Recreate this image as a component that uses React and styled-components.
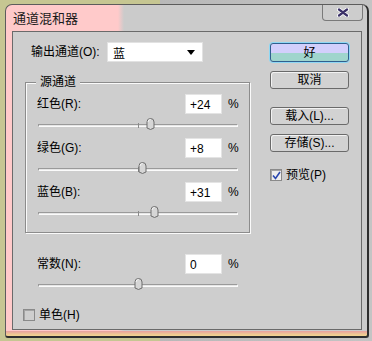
import React from 'react';
import styled, { createGlobalStyle } from 'styled-components';

const Global = createGlobalStyle`
  html, body {
    margin: 0;
    padding: 0;
  }
  body {
    width: 372px;
    height: 341px;
    overflow: hidden;
    background: #c6c692;
    font-family: "Liberation Sans", "Noto Sans CJK SC", sans-serif;
    font-size: 12px;
    color: #000;
  }
`;

const Page = styled.div`
  width: 372px;
  height: 341px;
  box-sizing: border-box;
  padding: 4px 0 0 5px;
  background: linear-gradient(90deg, #c6c692 0, #c6c692 160px, #b8b8b8 160px, #c4c4c4 100%);
`;

const Frame = styled.div`
  width: 364px;
  height: 334px;
  box-sizing: border-box;
  display: flex;
  flex-direction: column;
  padding: 0 5px 6px 6px;
  border: 1px solid #5c5c5c;
  border-right: 2px solid #2e2e2e;
  border-bottom: 2px solid #2e2e2e;
  border-radius: 7px 7px 3px 3px;
  background:
    linear-gradient(180deg, transparent 0, transparent 326px, #e8a0a0 326px, #f0d090 330px),
    linear-gradient(90deg, #ffcaca 0, #ffcaca 112px, #cbcbcb 118px, #cbcbcb 100%);
`;

const TitleBar = styled.div`
  height: 26px;
  display: flex;
  align-items: flex-start;
  justify-content: space-between;
`;

const Title = styled.div`
  margin: 4px 0 0 1px;
  font-family: "Noto Sans CJK SC", sans-serif;
  font-size: 13px;
  line-height: 18px;
  color: #1a1a1a;
`;

const CloseBtn = styled.div`
  width: 41px;
  height: 16px;
  box-sizing: border-box;
  margin-right: -1px;
  display: flex;
  align-items: center;
  justify-content: center;
  border: 1px solid #7a7a7a;
  border-top: none;
  border-radius: 0 0 4px 4px;
  background: #cdcdcd;
`;

const Client = styled.div`
  flex: 1;
  display: flex;
  border: 1px solid #6a6a6a;
  background: #cecece;
`;

const LeftCol = styled.div`
  width: 225px;
  padding-left: 12px;
  display: flex;
  flex-direction: column;
`;

const RightCol = styled.div`
  margin-left: 20px;
  padding-top: 11px;
  display: flex;
  flex-direction: column;
`;

const OutputRow = styled.div`
  margin: 10px 0 0 6px;
  display: flex;
  align-items: center;
  height: 20px;
`;

const OutputLabel = styled.span`
  width: 76px;
  line-height: 20px;
`;

const Select = styled.div`
  width: 96px;
  height: 20px;
  box-sizing: border-box;
  padding: 0 5px;
  display: flex;
  align-items: center;
  justify-content: space-between;
  background: #fff;
  border: 1px solid #e2e2e2;
`;

const Caret = styled.span`
  width: 0;
  height: 0;
  margin-right: 2px;
  border-left: 4px solid transparent;
  border-right: 4px solid transparent;
  border-top: 5px solid #000;
`;

const Group = styled.div`
  position: relative;
  width: 225px;
  height: 151px;
  box-sizing: border-box;
  margin-top: 20px;
  padding: 11px 0 0 11px;
  border: 1px solid #8c8c8c;
  box-shadow: inset 1px 1px 0 #fafafa, 1px 1px 0 #fafafa;
`;

const Legend = styled.span`
  position: absolute;
  top: -8px;
  left: 10px;
  padding: 0 4px;
  line-height: 15px;
  background: #cecece;
`;

const Row = styled.div`
  width: 201px;
  height: 20px;
  display: flex;
  align-items: center;
  margin-left: ${p => p.$indent || 0}px;
  margin-top: ${p => p.$top || 0}px;
`;

const Label = styled.span`
  flex: 1;
  line-height: 20px;
`;

const NumBox = styled.div`
  width: 37px;
  height: 20px;
  box-sizing: border-box;
  padding-left: 4px;
  line-height: 20px;
  background: #fff;
  border: 1px solid #e4e4e4;
`;

const Percent = styled.span`
  width: 10px;
  margin-left: 6px;
  line-height: 20px;
`;

const SliderWrap = styled.div`
  position: relative;
  width: 200px;
  height: 12px;
  margin: 4px 0 ${p => p.$bottom || 0}px ${p => p.$indent || 1}px;
`;

const Track = styled.div`
  position: absolute;
  left: 0;
  right: 0;
  top: 6px;
  height: 3px;
  box-sizing: border-box;
  border-top: 1px solid #9a9a9a;
  border-bottom: 1px solid #fbfbfb;
  border-left: 1px solid #9a9a9a;
  border-right: 1px solid #fbfbfb;
  background: #e6e6e6;
`;

const Tick = styled.div`
  position: absolute;
  left: 100px;
  top: 5px;
  width: 1px;
  height: 5px;
  background: #8a8a8a;
`;

const Thumb = styled.svg`
  position: absolute;
  top: 0;
  left: ${p => 100 + p.$value / 2 - 4}px;
`;

const Button = styled.div`
  width: 79px;
  height: 18px;
  box-sizing: border-box;
  margin-top: ${p => p.$top || 0}px;
  display: flex;
  align-items: center;
  justify-content: center;
  border: 1px solid #6a6a6a;
  border-radius: 3px;
  background: #d2d2d2;
  box-shadow: inset 1px 1px 0 #f2f2f2;
  line-height: 16px;
`;

const PrimaryButton = styled(Button)`
  height: 19px;
  border-color: #2f5f8f;
  background: linear-gradient(180deg, #d2cffc 0, #d2cffc 50%, #9fd5cd 50%, #9fd5cd 100%);
  box-shadow: 0 0 0 1px #8fd8f4;
`;

const CheckRow = styled.div`
  display: flex;
  align-items: center;
  gap: 4px;
  margin-top: ${p => p.$top || 0}px;
  margin-left: ${p => p.$indent || 0}px;
  line-height: 14px;
`;

const Box = styled.div`
  width: 12px;
  height: 12px;
  box-sizing: border-box;
  display: flex;
  align-items: center;
  justify-content: center;
  border: 1px solid #8a8a8a;
  background: ${p => (p.$checked ? '#eeeeee' : '#cecece')};
  box-shadow: inset 1px 1px 0 #a4a4a4;
`;

function Slider({ value, bottom, indent }) {
  return (
    <SliderWrap $bottom={bottom} $indent={indent}>
      <Track />
      <Tick />
      <Thumb $value={value} width="9" height="12" viewBox="0 0 9 12">
        <path
          d="M1 4 Q1 0.5 4.5 0.5 Q8 0.5 8 4 L8 10 L4.5 11.5 L1 10 Z"
          fill="#d6d6d6"
          stroke="#6c6c6c"
          strokeWidth="1"
        />
        <path d="M2 4 Q2 1.5 4.5 1.5" fill="none" stroke="#f6f6f6" strokeWidth="1" />
      </Thumb>
    </SliderWrap>
  );
}

function ValueRow({ label, value, top, indent }) {
  return (
    <Row $top={top} $indent={indent}>
      <Label>{label}</Label>
      <NumBox>{value}</NumBox>
      <Percent>%</Percent>
    </Row>
  );
}

const channels = [
  { label: '红色(R):', value: 24 },
  { label: '绿色(G):', value: 8 },
  { label: '蓝色(B):', value: 31 },
];

export default function App() {
  return (
    <>
      <Global />
      <Page>
        <Frame>
          <TitleBar>
            <Title>通道混和器</Title>
            <CloseBtn>
              <svg width="12" height="9" viewBox="0 0 12 9">
                <path d="M2 1.5 L10 7.5 M10 1.5 L2 7.5" stroke="#fff" strokeWidth="4" strokeLinecap="round" />
                <path d="M2 1.5 L10 7.5 M10 1.5 L2 7.5" stroke="#3b3168" strokeWidth="2.2" strokeLinecap="round" />
              </svg>
            </CloseBtn>
          </TitleBar>
          <Client>
            <LeftCol>
              <OutputRow>
                <OutputLabel>输出通道(O):</OutputLabel>
                <Select>
                  <span>蓝</span>
                  <Caret />
                </Select>
              </OutputRow>
              <Group>
                <Legend>源通道</Legend>
                {channels.map((c, i) => (
                  <React.Fragment key={c.label}>
                    <ValueRow label={c.label} value={`+${c.value}`} />
                    <Slider value={c.value} bottom={i < 2 ? 8 : 0} />
                  </React.Fragment>
                ))}
              </Group>
              <ValueRow label="常数(N):" value="0" top={21} indent={12} />
              <Slider value={0} indent={13} />
              <CheckRow $top={18} $indent={-2}>
                <Box />
                <span>单色(H)</span>
              </CheckRow>
            </LeftCol>
            <RightCol>
              <PrimaryButton>好</PrimaryButton>
              <Button $top={9}>取消</Button>
              <Button $top={18}>载入(L)...</Button>
              <Button $top={9}>存储(S)...</Button>
              <CheckRow $top={16}>
                <Box $checked>
                  <svg width="9" height="9" viewBox="0 0 9 9">
                    <path d="M1 4.5 L3.5 7.5 L8 1" fill="none" stroke="#2b48b0" strokeWidth="1.6" />
                  </svg>
                </Box>
                <span>预览(P)</span>
              </CheckRow>
            </RightCol>
          </Client>
        </Frame>
      </Page>
    </>
  );
}
